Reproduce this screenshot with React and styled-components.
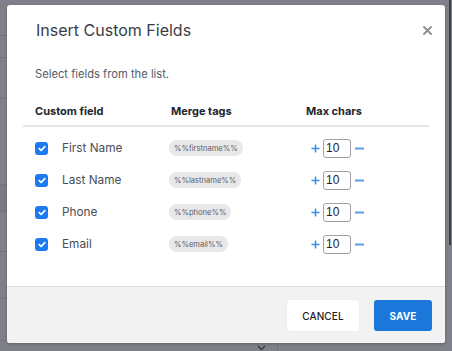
import React from "react";
import styled, { createGlobalStyle } from "styled-components";

const Global = createGlobalStyle`
  html, body { margin: 0; padding: 0; }
  body { font-family: Inter, "Noto Sans", sans-serif; }
  * { box-sizing: border-box; }
`;

const Backdrop = styled.div`
  position: relative;
  width: 452px;
  height: 351px;
  overflow: hidden;
  background-color: #80808a;
  background-image:
    linear-gradient(#6f6f78, #6f6f78),
    linear-gradient(#74747d, #74747d),
    linear-gradient(#74747d, #74747d),
    linear-gradient(#74747d, #74747d),
    linear-gradient(#74747d, #74747d),
    linear-gradient(#74747d, #74747d),
    linear-gradient(#74747d, #74747d),
    linear-gradient(#74747d, #74747d),
    linear-gradient(#7a7a83, #7a7a83),
    linear-gradient(#3f3f48, #3f3f48),
    linear-gradient(#74747d, #74747d);
  background-size:
    7px 1px, 7px 1px, 7px 1px, 7px 1px, 7px 1px, 7px 1px, 7px 1px, 7px 1px,
    7px 27px, 2px 245px, 1px 8px;
  background-position:
    0 35px, 0 57px, 0 98px, 0 184px, 0 211px, 0 251px, 0 298px, 0 340px,
    0 184px, 449px 0, 277px 344px;
  background-repeat: no-repeat;
  padding: 5px 7px 0 7px;
`;

const Modal = styled.div`
  width: 438px;
  height: 338px;
  background: #fff;
  border-radius: 3px;
  box-shadow: 0 1px 3px rgba(0, 0, 0, 0.25);
  display: flex;
  flex-direction: column;
  overflow: hidden;
`;

const Body = styled.div`
  flex: 1;
  padding: 0 16px 0 16px;
`;

const Header = styled.div`
  display: flex;
  justify-content: space-between;
  align-items: center;
  height: 50px;
  padding: 0 12px 0 29px;
`;

const Title = styled.h2`
  margin: 0;
  font-size: 16px;
  font-weight: 400;
  color: #3a3d48;
`;

const Close = styled.button`
  border: 0;
  background: none;
  padding: 0;
  width: 12px;
  height: 12px;
  display: flex;
  align-items: center;
  justify-content: center;
  cursor: pointer;
`;

const Intro = styled.p`
  margin: 12px 0 0 12px;
  font-size: 11.2px;
  color: #555a66;
  line-height: 14px;
`;

const Table = styled.div`
  margin-top: 15px;
`;

const Row = styled.div`
  display: grid;
  grid-template-columns: 136px 135px 1fr;
  align-items: center;
  height: ${(p) => p.h}px;
  padding-left: 12px;
  ${(p) => p.head && `border-bottom: 2px solid #e6e6e8;`}
`;

const HeadCell = styled.div`
  font-size: 11px;
  font-weight: 700;
  color: #23252d;
`;

const FieldCell = styled.label`
  display: flex;
  align-items: center;
  gap: 14px;
  font-size: 11.8px;
  color: #4a4d58;
`;

const Check = styled.span`
  width: 13px;
  height: 13px;
  border-radius: 3px;
  background: #1a7cf0;
  display: flex;
  align-items: center;
  justify-content: center;
`;

const Tag = styled.span`
  display: inline-flex;
  align-items: center;
  height: 16px;
  padding: 0 5px;
  border-radius: 8px;
  background: #e8e8ea;
  font-size: 7.6px;
  color: #5b5d66;
  justify-self: start;
  margin-left: -2px;
`;

const Stepper = styled.div`
  display: flex;
  align-items: center;
  margin-left: 5px;
`;

const StepBtn = styled.button`
  border: 0;
  background: none;
  padding: 0;
  width: 9px;
  height: 9px;
  display: flex;
  align-items: center;
  justify-content: center;
  cursor: pointer;
`;

const Num = styled.input`
  width: 28px;
  height: 19px;
  margin: 0 4px 0 3px;
  border: 1px solid #a0a0a6;
  border-radius: 3px;
  padding: 0 0 0 2px;
  font-family: "Liberation Sans", Arial, sans-serif;
  font-size: 12px;
  color: #222;
  outline: none;
`;

const Footer = styled.div`
  height: 57px;
  border-top: 1px solid #dcdcdf;
  background: #f2f2f2;
  display: flex;
  justify-content: flex-end;
  align-items: flex-start;
  gap: 15px;
  padding: 13px 13px 0 0;
`;

const Button = styled.button`
  height: 31px;
  width: ${(p) => p.w}px;
  border: 0;
  border-radius: 3px;
  font-family: Inter, sans-serif;
  font-size: 10px;
  font-weight: ${(p) => (p.primary ? 700 : 500)};
  letter-spacing: 0.1px;
  cursor: pointer;
  background: ${(p) => (p.primary ? "#1b77d9" : "#fff")};
  color: ${(p) => (p.primary ? "#fff" : "#1f2127")};
  box-shadow: ${(p) => (p.primary ? "none" : "0 0 2px rgba(0,0,0,0.06)")};
`;

const Chevron = styled.svg`
  position: absolute;
  left: 257px;
  top: 345px;
`;

const Spacer = styled.div`
  height: 5px;
`;

const fields = [
  { name: "First Name", tag: "%%firstname%%" },
  { name: "Last Name", tag: "%%lastname%%" },
  { name: "Phone", tag: "%%phone%%" },
  { name: "Email", tag: "%%email%%" },
];

export default function App() {
  return (
    <>
      <Global />
      <Backdrop>
        <Modal>
          <Header>
            <Title>Insert Custom Fields</Title>
            <Close aria-label="close">
              <svg width="9" height="9" viewBox="0 0 9 9">
                <path d="M1 1L8 8M8 1L1 8" stroke="#8a8a90" strokeWidth="1.8" strokeLinecap="round" />
              </svg>
            </Close>
          </Header>
          <Body>
            <Intro>Select fields from the list.</Intro>
            <Table>
              <Row head h={31}>
                <HeadCell>Custom field</HeadCell>
                <HeadCell>Merge tags</HeadCell>
                <HeadCell>Max chars</HeadCell>
              </Row>
              <Spacer />
              {fields.map((f) => (
                <Row key={f.name} h={32}>
                  <FieldCell>
                    <Check>
                      <svg width="8" height="7" viewBox="0 0 8 7">
                        <path d="M1.2 3.6L3.2 5.4L6.8 1.6" stroke="#fff" strokeWidth="1.6" fill="none" strokeLinecap="round" strokeLinejoin="round" />
                      </svg>
                    </Check>
                    {f.name}
                  </FieldCell>
                  <Tag>{f.tag}</Tag>
                  <Stepper>
                    <StepBtn aria-label="increase">
                      <svg width="9" height="9" viewBox="0 0 9 9">
                        <path d="M4.5 0.5V8.5M0.5 4.5H8.5" stroke="#3d8fe3" strokeWidth="1.6" />
                      </svg>
                    </StepBtn>
                    <Num defaultValue="10" />
                    <StepBtn aria-label="decrease">
                      <svg width="9" height="9" viewBox="0 0 9 9">
                        <path d="M0 4.5H9" stroke="#5b9ee6" strokeWidth="1.8" />
                      </svg>
                    </StepBtn>
                  </Stepper>
                </Row>
              ))}
            </Table>
          </Body>
          <Footer>
            <Button w={72}>CANCEL</Button>
            <Button primary w={58}>SAVE</Button>
          </Footer>
        </Modal>
        <Chevron width="9" height="6" viewBox="0 0 9 6">
          <path d="M1 1L4.5 4.5L8 1" stroke="#3a3a46" strokeWidth="1.4" fill="none" />
        </Chevron>
      </Backdrop>
    </>
  );
}
